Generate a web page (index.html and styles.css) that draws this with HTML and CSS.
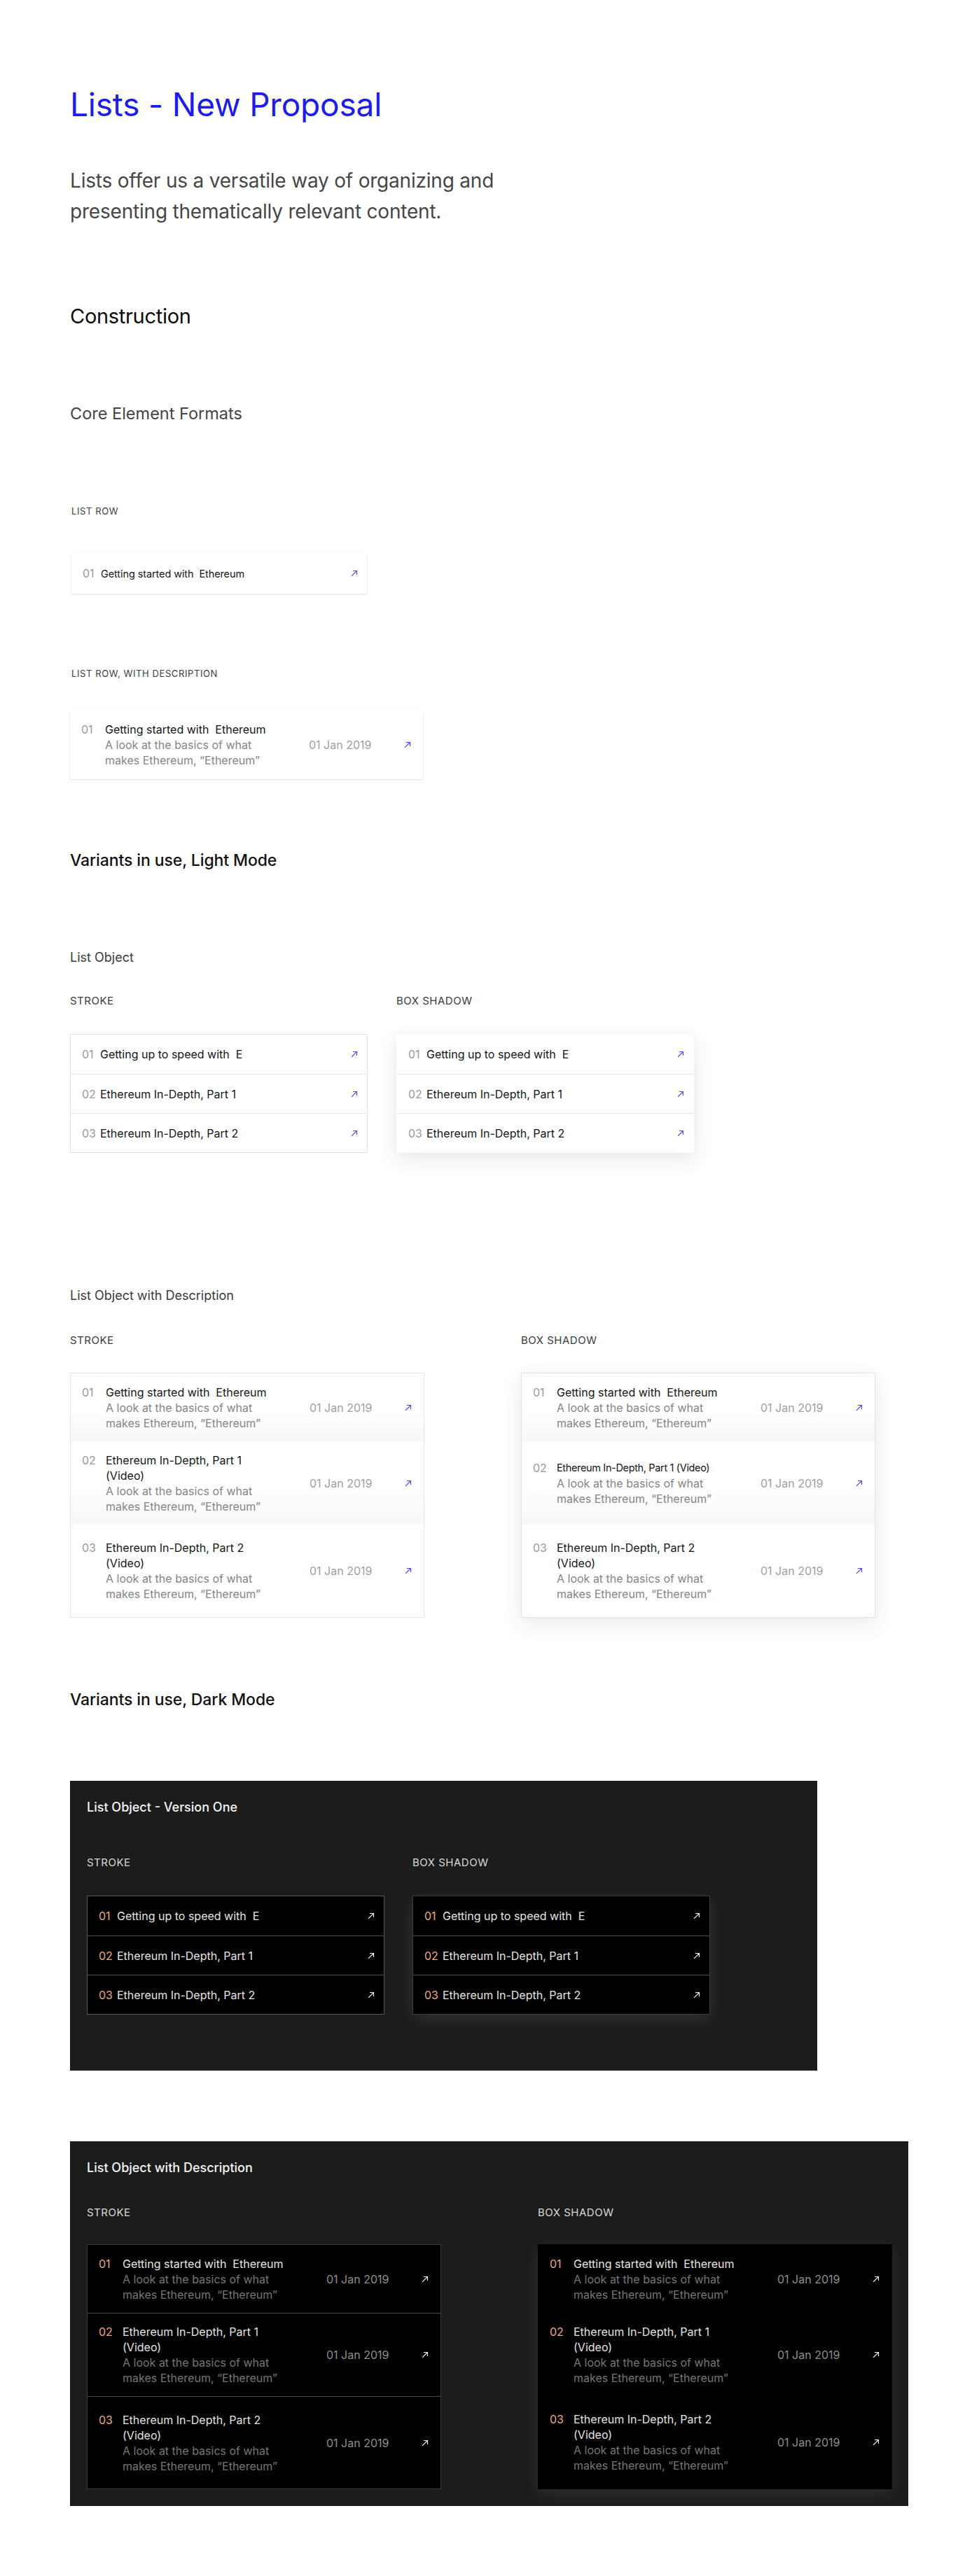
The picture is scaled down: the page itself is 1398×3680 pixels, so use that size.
FILE: index.html
```html
<!DOCTYPE html>
<html lang="en">
<head>
<meta charset="utf-8">
<title>Lists - New Proposal</title>
<link rel="stylesheet" href="styles.css">
</head>
<body>
<main class="page">
  <h1 class="title">Lists - New Proposal</h1>
  <p class="lead">Lists offer us a versatile way of organizing and presenting thematically relevant content.</p>

  <h2 class="h-construction">Construction</h2>
  <h3 class="h-core">Core Element Formats</h3>

  <div class="label label-row">LIST ROW</div>
  <div class="single-row">
    <div class="srow">
      <span class="num">01</span><span class="stitle small">Getting started with&nbsp; Ethereum</span>
      <svg class="arrow" viewBox="0 0 10 10"><path d="M1.5 8.5 L8.5 1.5 M3.5 1.5 H8.5 V6.5"/></svg>
    </div>
  </div>

  <div class="label label-desc">LIST ROW, WITH DESCRIPTION</div>
  <div class="single-desc">
    <div class="drow">
      <div class="main"><span class="num">01</span><div class="text"><div class="dtitle">Getting started with&nbsp; Ethereum</div><div class="desc">A look at the basics of what makes Ethereum, “Ethereum”</div></div></div>
      <span class="date">01 Jan 2019</span>
      <svg class="arrow" viewBox="0 0 10 10"><path d="M1.5 8.5 L8.5 1.5 M3.5 1.5 H8.5 V6.5"/></svg>
    </div>
  </div>

  <h2 class="h-variant h-light">Variants in use, Light Mode</h2>
  <h4 class="h-obj h-obj1">List Object</h4>
  <div class="cols cols-obj cols-obj-light">
    <section class="col">
      <div class="label">STROKE</div>
      <div class="list list-stroke">
        <div class="srow"><span class="num">01</span><span class="stitle">Getting up to speed with&nbsp; E</span><svg class="arrow" viewBox="0 0 10 10"><path d="M1.5 8.5 L8.5 1.5 M3.5 1.5 H8.5 V6.5"/></svg></div>
        <div class="srow"><span class="num">02</span><span class="stitle">Ethereum In-Depth, Part 1</span><svg class="arrow" viewBox="0 0 10 10"><path d="M1.5 8.5 L8.5 1.5 M3.5 1.5 H8.5 V6.5"/></svg></div>
        <div class="srow"><span class="num">03</span><span class="stitle">Ethereum In-Depth, Part 2</span><svg class="arrow" viewBox="0 0 10 10"><path d="M1.5 8.5 L8.5 1.5 M3.5 1.5 H8.5 V6.5"/></svg></div>
      </div>
    </section>
    <section class="col">
      <div class="label">BOX SHADOW</div>
      <div class="list list-shadow">
        <div class="srow"><span class="num">01</span><span class="stitle">Getting up to speed with&nbsp; E</span><svg class="arrow" viewBox="0 0 10 10"><path d="M1.5 8.5 L8.5 1.5 M3.5 1.5 H8.5 V6.5"/></svg></div>
        <div class="srow"><span class="num">02</span><span class="stitle">Ethereum In-Depth, Part 1</span><svg class="arrow" viewBox="0 0 10 10"><path d="M1.5 8.5 L8.5 1.5 M3.5 1.5 H8.5 V6.5"/></svg></div>
        <div class="srow"><span class="num">03</span><span class="stitle">Ethereum In-Depth, Part 2</span><svg class="arrow" viewBox="0 0 10 10"><path d="M1.5 8.5 L8.5 1.5 M3.5 1.5 H8.5 V6.5"/></svg></div>
      </div>
    </section>
  </div>

  <h4 class="h-obj h-obj2">List Object with Description</h4>
  <div class="cols cols-desc cols-desc-light">
    <section class="col">
      <div class="label">STROKE</div>
      <div class="dlist dlist-stroke">
        <div class="drow"><div class="main"><span class="num">01</span><div class="text"><div class="dtitle">Getting started with&nbsp; Ethereum</div><div class="desc">A look at the basics of what makes Ethereum, “Ethereum”</div></div></div><span class="date">01 Jan 2019</span><svg class="arrow" viewBox="0 0 10 10"><path d="M1.5 8.5 L8.5 1.5 M3.5 1.5 H8.5 V6.5"/></svg></div>
        <div class="drow"><div class="main"><span class="num">02</span><div class="text"><div class="dtitle">Ethereum In-Depth, Part 1 (Video)</div><div class="desc">A look at the basics of what makes Ethereum, “Ethereum”</div></div></div><span class="date">01 Jan 2019</span><svg class="arrow" viewBox="0 0 10 10"><path d="M1.5 8.5 L8.5 1.5 M3.5 1.5 H8.5 V6.5"/></svg></div>
        <div class="drow"><div class="main"><span class="num">03</span><div class="text"><div class="dtitle">Ethereum In-Depth, Part 2 (Video)</div><div class="desc">A look at the basics of what makes Ethereum, “Ethereum”</div></div></div><span class="date">01 Jan 2019</span><svg class="arrow" viewBox="0 0 10 10"><path d="M1.5 8.5 L8.5 1.5 M3.5 1.5 H8.5 V6.5"/></svg></div>
      </div>
    </section>
    <section class="col">
      <div class="label">BOX SHADOW</div>
      <div class="dlist dlist-shadow">
        <div class="drow"><div class="main"><span class="num">01</span><div class="text"><div class="dtitle">Getting started with&nbsp; Ethereum</div><div class="desc">A look at the basics of what makes Ethereum, “Ethereum”</div></div></div><span class="date">01 Jan 2019</span><svg class="arrow" viewBox="0 0 10 10"><path d="M1.5 8.5 L8.5 1.5 M3.5 1.5 H8.5 V6.5"/></svg></div>
        <div class="drow"><div class="main"><span class="num">02</span><div class="text"><div class="dtitle tight">Ethereum In-Depth, Part 1 (Video)</div><div class="desc">A look at the basics of what makes Ethereum, “Ethereum”</div></div></div><span class="date">01 Jan 2019</span><svg class="arrow" viewBox="0 0 10 10"><path d="M1.5 8.5 L8.5 1.5 M3.5 1.5 H8.5 V6.5"/></svg></div>
        <div class="drow"><div class="main"><span class="num">03</span><div class="text"><div class="dtitle">Ethereum In-Depth, Part 2 (Video)</div><div class="desc">A look at the basics of what makes Ethereum, “Ethereum”</div></div></div><span class="date">01 Jan 2019</span><svg class="arrow" viewBox="0 0 10 10"><path d="M1.5 8.5 L8.5 1.5 M3.5 1.5 H8.5 V6.5"/></svg></div>
      </div>
    </section>
  </div>

  <h2 class="h-variant h-dark">Variants in use, Dark Mode</h2>

  <div class="panel panel-one">
    <h4 class="panel-title">List Object - Version One</h4>
    <div class="cols cols-obj cols-obj-dark">
      <section class="col">
        <div class="label">STROKE</div>
        <div class="list list-stroke">
          <div class="srow"><span class="num">01</span><span class="stitle">Getting up to speed with&nbsp; E</span><svg class="arrow" viewBox="0 0 10 10"><path d="M1.5 8.5 L8.5 1.5 M3.5 1.5 H8.5 V6.5"/></svg></div>
          <div class="srow"><span class="num">02</span><span class="stitle">Ethereum In-Depth, Part 1</span><svg class="arrow" viewBox="0 0 10 10"><path d="M1.5 8.5 L8.5 1.5 M3.5 1.5 H8.5 V6.5"/></svg></div>
          <div class="srow"><span class="num">03</span><span class="stitle">Ethereum In-Depth, Part 2</span><svg class="arrow" viewBox="0 0 10 10"><path d="M1.5 8.5 L8.5 1.5 M3.5 1.5 H8.5 V6.5"/></svg></div>
        </div>
      </section>
      <section class="col">
        <div class="label">BOX SHADOW</div>
        <div class="list list-shadow">
          <div class="srow"><span class="num">01</span><span class="stitle">Getting up to speed with&nbsp; E</span><svg class="arrow" viewBox="0 0 10 10"><path d="M1.5 8.5 L8.5 1.5 M3.5 1.5 H8.5 V6.5"/></svg></div>
          <div class="srow"><span class="num">02</span><span class="stitle">Ethereum In-Depth, Part 1</span><svg class="arrow" viewBox="0 0 10 10"><path d="M1.5 8.5 L8.5 1.5 M3.5 1.5 H8.5 V6.5"/></svg></div>
          <div class="srow"><span class="num">03</span><span class="stitle">Ethereum In-Depth, Part 2</span><svg class="arrow" viewBox="0 0 10 10"><path d="M1.5 8.5 L8.5 1.5 M3.5 1.5 H8.5 V6.5"/></svg></div>
        </div>
      </section>
    </div>
  </div>

  <div class="panel panel-two">
    <h4 class="panel-title">List Object with Description</h4>
    <div class="cols cols-desc cols-desc-dark">
      <section class="col">
        <div class="label">STROKE</div>
        <div class="dlist dlist-stroke">
          <div class="drow"><div class="main"><span class="num">01</span><div class="text"><div class="dtitle">Getting started with&nbsp; Ethereum</div><div class="desc">A look at the basics of what makes Ethereum, “Ethereum”</div></div></div><span class="date">01 Jan 2019</span><svg class="arrow" viewBox="0 0 10 10"><path d="M1.5 8.5 L8.5 1.5 M3.5 1.5 H8.5 V6.5"/></svg></div>
          <div class="drow"><div class="main"><span class="num">02</span><div class="text"><div class="dtitle">Ethereum In-Depth, Part 1 (Video)</div><div class="desc">A look at the basics of what makes Ethereum, “Ethereum”</div></div></div><span class="date">01 Jan 2019</span><svg class="arrow" viewBox="0 0 10 10"><path d="M1.5 8.5 L8.5 1.5 M3.5 1.5 H8.5 V6.5"/></svg></div>
          <div class="drow"><div class="main"><span class="num">03</span><div class="text"><div class="dtitle">Ethereum In-Depth, Part 2 (Video)</div><div class="desc">A look at the basics of what makes Ethereum, “Ethereum”</div></div></div><span class="date">01 Jan 2019</span><svg class="arrow" viewBox="0 0 10 10"><path d="M1.5 8.5 L8.5 1.5 M3.5 1.5 H8.5 V6.5"/></svg></div>
        </div>
      </section>
      <section class="col">
        <div class="label">BOX SHADOW</div>
        <div class="dlist dlist-shadow">
          <div class="drow"><div class="main"><span class="num">01</span><div class="text"><div class="dtitle">Getting started with&nbsp; Ethereum</div><div class="desc">A look at the basics of what makes Ethereum, “Ethereum”</div></div></div><span class="date">01 Jan 2019</span><svg class="arrow" viewBox="0 0 10 10"><path d="M1.5 8.5 L8.5 1.5 M3.5 1.5 H8.5 V6.5"/></svg></div>
          <div class="drow"><div class="main"><span class="num">02</span><div class="text"><div class="dtitle">Ethereum In-Depth, Part 1 (Video)</div><div class="desc">A look at the basics of what makes Ethereum, “Ethereum”</div></div></div><span class="date">01 Jan 2019</span><svg class="arrow" viewBox="0 0 10 10"><path d="M1.5 8.5 L8.5 1.5 M3.5 1.5 H8.5 V6.5"/></svg></div>
          <div class="drow"><div class="main"><span class="num">03</span><div class="text"><div class="dtitle">Ethereum In-Depth, Part 2 (Video)</div><div class="desc">A look at the basics of what makes Ethereum, “Ethereum”</div></div></div><span class="date">01 Jan 2019</span><svg class="arrow" viewBox="0 0 10 10"><path d="M1.5 8.5 L8.5 1.5 M3.5 1.5 H8.5 V6.5"/></svg></div>
        </div>
      </section>
    </div>
  </div>
</main>
</body>
</html>
```

FILE: styles.css
```css
* { box-sizing: border-box; }
html, body { margin: 0; padding: 0; background: #fff; }
body {
  font-family: Inter, "Noto Sans", "Liberation Sans", sans-serif;
  color: #111;
  -webkit-font-smoothing: antialiased;
}
h1, h2, h3, h4, p { margin: 0; font-weight: 400; }

.page {
  padding: 121px 0 102px 100px;
}

.title {
  font-size: 46px;
  line-height: 56px;
  color: #1d1de3;
  font-weight: 400;
  letter-spacing: -0.2px;
}
.lead {
  margin-top: 59px;
  font-size: 28px;
  line-height: 44px;
  color: #464646;
  max-width: 680px;
  letter-spacing: -0.2px;
}
.h-construction {
  margin-top: 110px;
  font-size: 29px;
  line-height: 36px;
  color: #0a0a0a;
  letter-spacing: -0.3px;
}
.h-core {
  margin-top: 107px;
  font-size: 23.5px;
  line-height: 28px;
  color: #444;
}

.label {
  font-size: 15px;
  line-height: 18px;
  color: #3c3c3c;
  letter-spacing: 0.5px;
}
.label-row, .label-desc {
  font-size: 13px;
  line-height: 16px;
  letter-spacing: 0.6px;
  padding-left: 2px;
}
.label-row { margin-top: 117px; }
.label-desc { margin-top: 106px; }

/* arrows */
.arrow {
  width: 10px;
  height: 10px;
  flex: none;
  fill: none;
  stroke: #5046f0;
  stroke-width: 1.2;
  stroke-linecap: square;
  margin-left: auto;
}

/* simple rows */
.srow {
  display: flex;
  align-items: center;
  height: 56px;
  padding: 0 13px 0 16px;
  font-size: 16px;
}
.srow .num {
  width: 26px;
  flex: none;
  color: #9a9a9a;
}
.srow .stitle { color: #151515; }
.srow .stitle.small { font-size: 14.5px; letter-spacing: -0.1px; }

.single-row {
  margin-top: 52px;
  margin-left: 2px;
  width: 422px;
  background: #fff;
  box-shadow: 0 1px 2px rgba(0, 0, 0, 0.12), 0 0 1px rgba(0, 0, 0, 0.06);
}
.single-row .srow { height: 58px; }

.list {
  margin-top: 38px;
  width: 425px;
  background: #fff;
}
.list .srow + .srow { border-top: 1px solid #e6e6e6; }
.list-stroke { border: 1px solid #e3e3e3; }
.list-shadow {
  border: 1px solid transparent;
  box-shadow: 0 10px 28px rgba(0, 0, 0, 0.09), 0 0 12px rgba(0, 0, 0, 0.03);
}

/* description rows */
.drow {
  display: flex;
  align-items: center;
  padding: 0 17px 0 16px;
  font-size: 16px;
  line-height: 22px;
}
.drow .main { display: flex; width: 274px; flex: none; }
.drow .num { width: 34px; flex: none; color: #9a9a9a; }
.drow .text { width: 240px; }
.drow .dtitle { color: #151515; }
.drow .dtitle.tight { font-size: 14.5px; letter-spacing: -0.35px; white-space: nowrap; }
.drow .desc { color: #858585; }
.drow .date { margin-left: 51px; color: #a0a0a0; white-space: nowrap; }

.single-desc {
  margin-top: 45px;
  width: 504px;
  background: #fff;
  box-shadow: 0 1px 2px rgba(0, 0, 0, 0.12), 0 0 1px rgba(0, 0, 0, 0.06);
}
.single-desc .drow { min-height: 98px; }

.dlist {
  margin-top: 37px;
  width: 506px;
  background: #fff;
}
.dlist .drow:nth-child(1) { min-height: 97px; }
.dlist .drow:nth-child(2) { min-height: 119px; }
.dlist .drow:nth-child(3) { min-height: 132px; }
.dlist-stroke, .dlist-shadow { border: 1px solid #e4e4e4; }
.cols-desc-light .dlist .drow:nth-child(-n+2) {
  background: linear-gradient(to bottom, #fff 55%, #f7f7f7 100%);
}
.dlist-shadow {
  box-shadow: 0 10px 30px rgba(0, 0, 0, 0.08), 0 0 14px rgba(0, 0, 0, 0.03);
}

/* headings */
.h-variant {
  font-size: 23px;
  line-height: 28px;
  font-weight: 500;
  color: #111;
  letter-spacing: -0.1px;
}
.h-light { margin-top: 102px; }
.h-dark { margin-top: 103px; }

.h-obj {
  font-size: 18px;
  line-height: 22px;
  color: #3a3a3a;
}
.h-obj1 { margin-top: 114px; }
.h-obj2 { margin-top: 193px; }

.cols { display: flex; }
.cols-obj { gap: 41px; margin-top: 42px; }
.cols-desc { gap: 138px; margin-top: 44px; }

/* dark panels */
.panel {
  background: #1c1c1c;
  padding: 27px 24px 80px;
}
.panel-one { margin-top: 102px; width: 1067px; }
.panel-two { margin-top: 101px; width: 1197px; padding-bottom: 24px; }
.panel-title {
  font-size: 18px;
  line-height: 22px;
  font-weight: 500;
  color: #f4f4f4;
}
.panel .label { color: #d8d8d8; }
.cols-obj-dark { gap: 40px; margin-top: 59px; }
.cols-desc-dark { margin-top: 44px; }
.panel .dlist { margin-top: 36px; }

.panel .list, .panel .dlist { background: #000; }
.panel .num { color: #eaa985; }
.panel .stitle, .panel .dtitle { color: #e4e4e4; }
.panel .desc { color: #767676; }
.panel .date { color: #8e8e8e; }
.panel .arrow { stroke: #f2f2f2; }

.panel .list-stroke { border: 1px solid #575757; }
.panel .list .srow + .srow { border-top: 1px solid #4d4d4d; }
.panel .list-shadow {
  border: 1px solid #3c3c3c;
  box-shadow: 0 8px 22px rgba(255, 255, 255, 0.08), 0 0 30px rgba(255, 255, 255, 0.03);
}
.panel .dlist-stroke { border: 1px solid #3a3a3a; }
.panel .dlist-stroke .drow + .drow { border-top: 1px solid #4a4a4a; }
.panel .dlist-shadow {
  border: 1px solid transparent;
  box-shadow: 0 8px 24px rgba(255, 255, 255, 0.07), 0 0 30px rgba(255, 255, 255, 0.03);
}
```
